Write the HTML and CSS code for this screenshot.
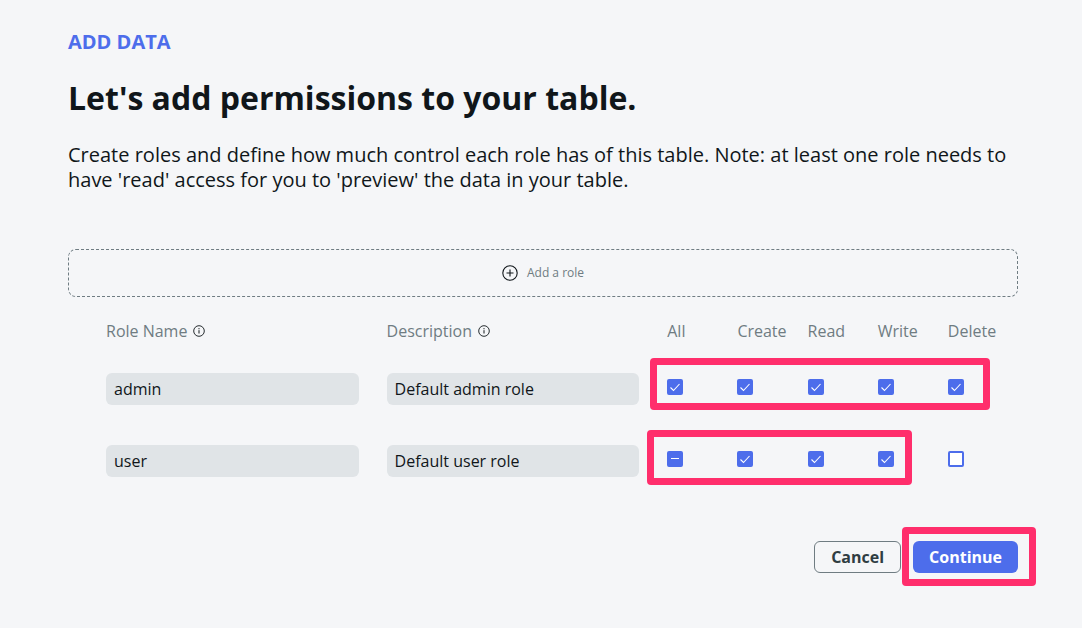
FILE: index.html
```html
<!DOCTYPE html>
<html lang="en">
<head>
<meta charset="utf-8">
<title>Add data</title>
<link rel="stylesheet" href="styles.css">
</head>
<body>
<svg class="defs" aria-hidden="true">
  <symbol id="info" viewBox="0 0 12 12">
    <circle cx="6" cy="6" r="5.300" fill="none" stroke="currentColor" stroke-width=".9"/>
    <path d="M6 5.200V8.500" fill="none" stroke="currentColor"/>
    <circle cx="6" cy="3.700" r=".6" fill="currentColor"/>
  </symbol>
  <symbol id="check" viewBox="0 0 16 16">
    <path d="M3.500 8.500 6.500 11.500 12.500 5" fill="none" stroke="#fff" stroke-width="1.100"/>
  </symbol>
  <symbol id="minus" viewBox="0 0 16 16">
    <path d="M4 7.500h8" fill="none" stroke="#fff"/>
  </symbol>
</svg>
<main class="page">
  <p class="eyebrow">ADD DATA</p>
  <h1 class="title">Let's add permissions to your table.</h1>
  <p class="intro">Create roles and define how much control each role has of this table. Note: at least one role needs to have 'read' access for you to 'preview' the data in your table.</p>
  <button class="add-role" type="button">
    <svg class="add-icon" viewBox="0 0 16 16" aria-hidden="true"><g fill="none" stroke="#10161a" stroke-width="1.100"><circle cx="8" cy="8" r="7.200"/><path d="M8 4.500v7M4.500 8h7"/></g></svg>
    Add a role
  </button>
  <table class="roles">
    <colgroup><col class="wide"><col class="wide"><col><col><col><col><col></colgroup>
    <thead>
      <tr>
        <th scope="col"><span class="heading">Role Name <svg class="info"><use href="#info"/></svg></span></th>
        <th scope="col"><span class="heading">Description <svg class="info"><use href="#info"/></svg></span></th>
        <th scope="col">All</th>
        <th scope="col">Create</th>
        <th scope="col">Read</th>
        <th scope="col">Write</th>
        <th scope="col">Delete</th>
      </tr>
    </thead>
    <tbody>
      <tr>
        <td><input class="field" type="text" value="admin" aria-label="Role name"></td>
        <td><input class="field" type="text" value="Default admin role" aria-label="Description"></td>
        <td class="tick-cell"><label class="tick"><input type="checkbox" aria-label="admin: all" checked><svg><use href="#check"/></svg></label><span class="mark mark-admin"></span></td>
        <td class="tick-cell"><label class="tick"><input type="checkbox" aria-label="admin: create" checked><svg><use href="#check"/></svg></label></td>
        <td class="tick-cell"><label class="tick"><input type="checkbox" aria-label="admin: read" checked><svg><use href="#check"/></svg></label></td>
        <td class="tick-cell"><label class="tick"><input type="checkbox" aria-label="admin: write" checked><svg><use href="#check"/></svg></label></td>
        <td class="tick-cell"><label class="tick"><input type="checkbox" aria-label="admin: delete" checked><svg><use href="#check"/></svg></label></td>
      </tr>
      <tr>
        <td><input class="field" type="text" value="user" aria-label="Role name"></td>
        <td><input class="field" type="text" value="Default user role" aria-label="Description"></td>
        <td class="tick-cell"><label class="tick"><input type="checkbox" aria-label="user: all" checked><svg><use href="#minus"/></svg></label><span class="mark mark-user"></span></td>
        <td class="tick-cell"><label class="tick"><input type="checkbox" aria-label="user: create" checked><svg><use href="#check"/></svg></label></td>
        <td class="tick-cell"><label class="tick"><input type="checkbox" aria-label="user: read" checked><svg><use href="#check"/></svg></label></td>
        <td class="tick-cell"><label class="tick"><input type="checkbox" aria-label="user: write" checked><svg><use href="#check"/></svg></label></td>
        <td class="tick-cell"><label class="tick"><input type="checkbox" aria-label="user: delete"><svg><use href="#check"/></svg></label></td>
      </tr>
    </tbody>
  </table>
  <div class="actions">
    <button class="button cancel" type="button">Cancel</button>
    <div class="continue-wrap">
      <button class="button continue" type="button">Continue</button>
      <span class="mark mark-continue"></span>
    </div>
  </div>
</main>
</body>
</html>
```
FILE: styles.css
```css
* { box-sizing: border-box; }
body {
  margin: 0;
  background: #f5f6f8;
  color: #10161a;
  font: 16px/24px "Open Sans", "Noto Sans", sans-serif;
}
button, input { font: inherit; color: inherit; margin: 0; }
.defs { display: none; }
.page { padding: 29px 64px 40px 68px; }
.eyebrow {
  margin: 0;
  color: #4d6deb;
  font-size: 20px;
  line-height: 25px;
  font-weight: 700;
}
.title {
  margin: 24px 0;
  font-size: 32px;
  line-height: 40px;
  font-weight: 700;
}
.intro {
  margin: 0 0 57px;
  font-size: 20px;
  line-height: 25px;
}
.add-role {
  display: flex;
  align-items: center;
  justify-content: center;
  gap: 9px;
  width: 100%;
  height: 48px;
  border: 1px dashed #6f7c82;
  border-radius: 8px;
  background: transparent;
  color: #6f7c82;
  font-size: 12px;
  line-height: 16px;
}
.add-icon { width: 16px; height: 16px; }
.roles {
  width: calc(100% - 38px);
  margin: 12px 0 0 38px;
  table-layout: fixed;
  border-collapse: collapse;
}
.wide { width: 30.77%; }
.roles th {
  padding: 10px 0;
  color: #6f7c82;
  font-weight: 400;
  text-align: left;
}
.heading { display: flex; align-items: center; gap: 6px; }
.info { width: 12px; height: 12px; color: #10161a; }
.roles td { height: 72px; padding: 20px 0; vertical-align: top; }
.roles .tick-cell { position: relative; padding: 26px 0 0; }
.field {
  display: block;
  width: calc(100% - 28px);
  height: 32px;
  padding: 0 8px;
  border: 0;
  border-radius: 6px;
  background: #e0e4e7;
}
.tick { display: grid; width: 16px; height: 16px; }
.tick input, .tick svg { grid-area: 1 / 1; width: 16px; height: 16px; }
.tick input {
  appearance: none;
  border: 2px solid #4d6deb;
  border-radius: 2px;
  background: #fff;
}
.tick input:checked { background: #4d6deb; }
.tick svg { z-index: 1; visibility: hidden; pointer-events: none; }
.tick input:checked + svg { visibility: visible; }
.mark {
  position: absolute;
  z-index: 2;
  border: 7px solid #ff2e6c;
  border-radius: 4px;
  pointer-events: none;
}
.mark-admin { left: -17px; top: 5px; width: 340px; height: 52px; }
.mark-user { left: -20px; top: 5px; width: 265px; height: 55px; }
.mark-continue { left: -11px; top: -14px; width: 134px; height: 59px; }
.actions {
  display: flex;
  justify-content: flex-end;
  gap: 12px;
  margin-top: 44px;
}
.continue-wrap { position: relative; }
.button {
  display: block;
  height: 32px;
  padding: 0 16px;
  border: 0;
  border-radius: 6px;
  line-height: 30px;
  font-weight: 700;
}
.cancel { border: 1px solid #6f7c82; background: transparent; color: #2f3d42; }
.continue { background: #4d6deb; color: #fff; }
```
